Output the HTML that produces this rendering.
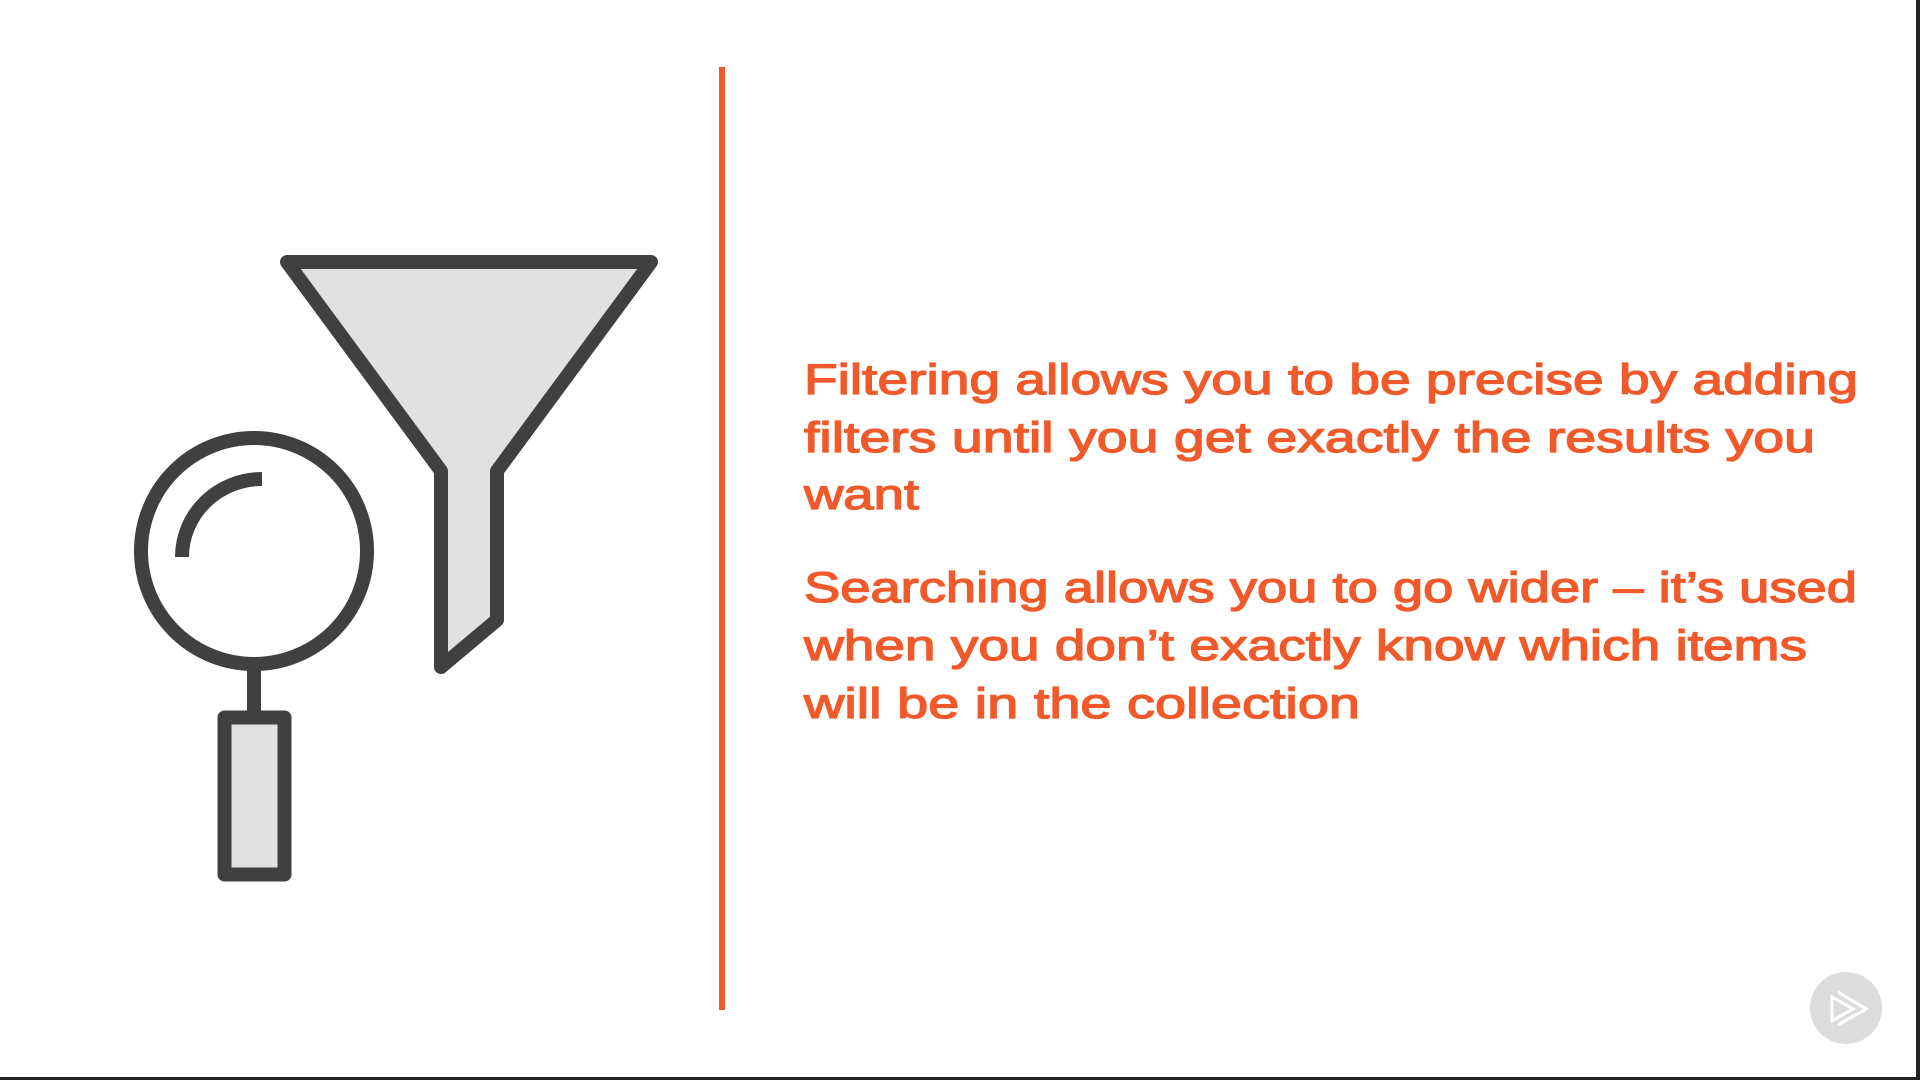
<!DOCTYPE html>
<html><head><meta charset="utf-8"><style>
html,body{margin:0;padding:0;background:#fff}
svg{display:block}
text{font-family:"Liberation Sans",sans-serif;font-size:43px;fill:#f05a2a;stroke:#f05a2a;stroke-width:1.3px;font-weight:normal}
</style></head><body>
<svg width="1920" height="1080" viewBox="0 0 1920 1080">
<rect width="1920" height="1080" fill="#fff"/>
<rect x="1916" y="0" width="4" height="1080" fill="#222"/>
<rect x="0" y="1077" width="1920" height="3" fill="#222"/>
<path d="M287 262 L651 262 L497 471 L497 620 L441 667 L441 471 Z" fill="#e1e1e1" stroke="#404040" stroke-width="14" stroke-linejoin="round"/>
<circle cx="254" cy="551" r="113" fill="#fff" stroke="#404040" stroke-width="14"/>
<path d="M182 557 A80 78 0 0 1 262 479" fill="none" stroke="#404040" stroke-width="14"/>
<line x1="254" y1="664" x2="254" y2="717" stroke="#404040" stroke-width="14"/>
<rect x="224.5" y="717.5" width="60" height="157" fill="#e1e1e1" stroke="#404040" stroke-width="14" stroke-linejoin="round"/>
<rect x="719" y="67" width="6" height="943" fill="#f05a2a"/>
<text x="804" y="394" textLength="1054" lengthAdjust="spacingAndGlyphs">Filtering allows you to be precise by adding</text>
<text x="804" y="452" textLength="1011" lengthAdjust="spacingAndGlyphs">filters until you get exactly the results you</text>
<text x="804" y="509" textLength="115" lengthAdjust="spacingAndGlyphs">want</text>
<text x="804" y="602" textLength="1053" lengthAdjust="spacingAndGlyphs">Searching allows you to go wider – it’s used</text>
<text x="804" y="660" textLength="1003" lengthAdjust="spacingAndGlyphs">when you don’t exactly know which items</text>
<text x="804" y="718" textLength="556" lengthAdjust="spacingAndGlyphs">will be in the collection</text>
<circle cx="1846" cy="1008" r="36" fill="#dcdcdc"/>
<path d="M1832 997 L1832 1021 L1853 1009 Z M1838 992 L1866 1009 L1838 1025" fill="none" stroke="#fff" stroke-width="3" stroke-linejoin="miter"/>
</svg>
</body></html>
